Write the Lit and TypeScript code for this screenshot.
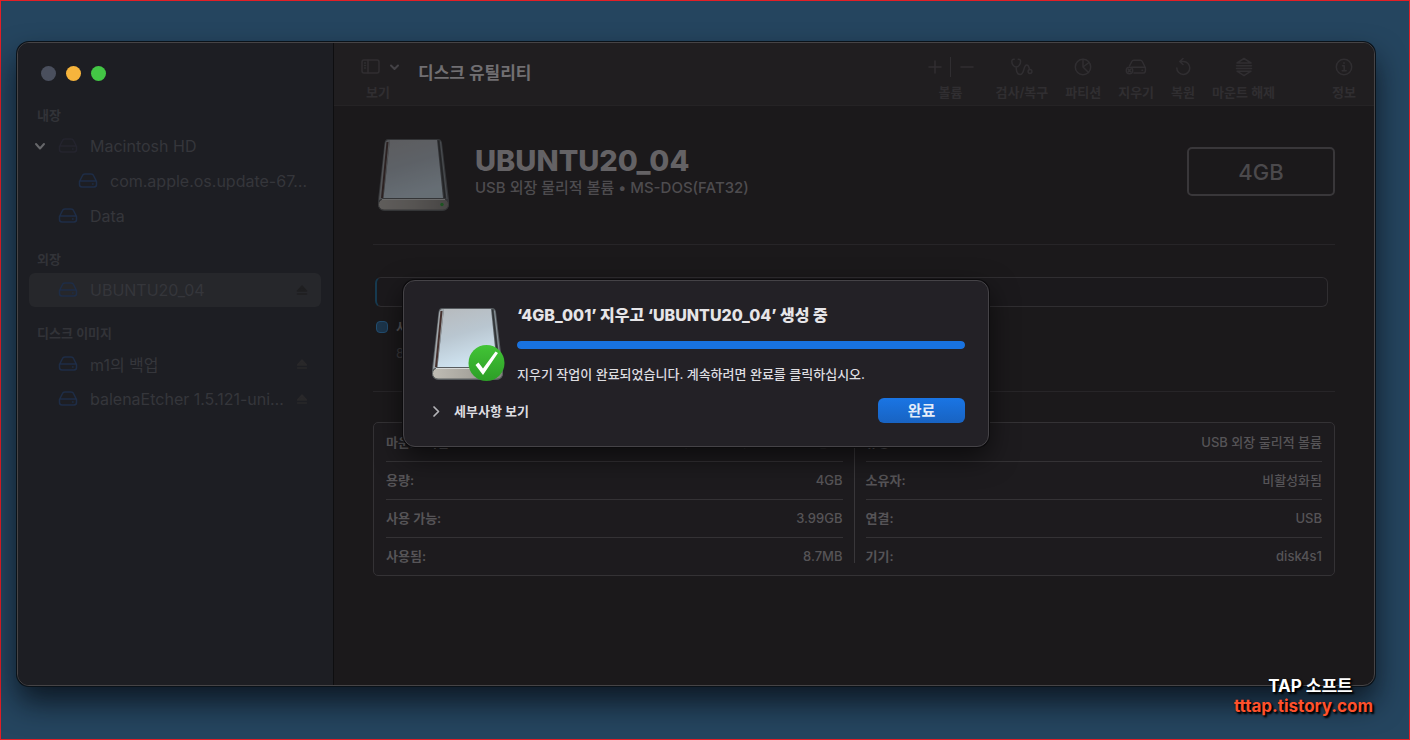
import { LitElement, html, css, svg, nothing } from "lit";
import { customElement, property } from "lit/decorators.js";

type Volume = { name: string; indent?: boolean; open?: boolean; dim?: boolean; selected?: boolean; eject?: boolean };
type Section = { title: string; volumes: Volume[] };

const sections: Section[] = [
  {
    title: "내장",
    volumes: [
      { name: "Macintosh HD", open: true, dim: true },
      { name: "com.apple.os.update-67…", indent: true },
      { name: "Data" },
    ],
  },
  { title: "외장", volumes: [{ name: "UBUNTU20_04", selected: true, eject: true }] },
  {
    title: "디스크 이미지",
    volumes: [
      { name: "m1의 백업", eject: true },
      { name: "balenaEtcher 1.5.121-uni…", eject: true },
    ],
  },
];

const details: [string, string][][] = [
  [
    ["마운트 지점:", "/Volumes/UBUNTU20_04"],
    ["용량:", "4GB"],
    ["사용 가능:", "3.99GB"],
    ["사용됨:", "8.7MB"],
  ],
  [
    ["유형:", "USB 외장 물리적 볼륨"],
    ["소유자:", "비활성화됨"],
    ["연결:", "USB"],
    ["기기:", "disk4s1"],
  ],
];

const toolIcons = {
  check: svg`<path d="M3.200 2.200Q.8 2 .8 4.500C.8 7.500 3 10 5.200 10S9.600 7.500 9.600 4.500Q9.600 2 7.200 2.200M5.200 10c0 3.500 1 7.500 4 7.500 4.500 0 3-9.500 6.500-9.500 2.500 0 2 3 3 4.700"/><circle cx="19" cy="14.500" r="1.900"/>`,
  partition: svg`<circle cx="11" cy="10" r="7.700"/><path d="M11 2.300V10l5.500 5.500M11 10l6-4.500"/>`,
  erase: svg`<path d="M4.500 9 6.800 4.500q.6-1.200 2-1.200h6.500q1.400 0 2 1.200l3 6q.9 5.500-2 5.500H9M6.500 10.200h13.500M17 13.200h.5"/><circle cx="4.500" cy="13.500" r="3.200"/><path d="m3.400 12.400 2.200 2.200m0-2.200-2.200 2.200"/>`,
  restore: svg`<path d="M8 4.500h3.500a6.500 6.500 0 1 1-6.700 6.500M11 1.500l-3.300 3 3.300 3"/>`,
  unmount: svg`<path d="M4 6 11 1.500 18 6zM3.500 8.700h15M3.500 11.500h15M4 14.200l7 4.500 7-4.500z"/>`,
  info: svg`<circle cx="11" cy="10" r="7.700"/><path d="M9.500 8.700h1.700v5M9.200 13.700h4M11 5.700v.8"/>`,
};

const tools: { label: string; icon: unknown }[] = [
  { label: "검사/복구", icon: toolIcons.check },
  { label: "파티션", icon: toolIcons.partition },
  { label: "지우기", icon: toolIcons.erase },
  { label: "복원", icon: toolIcons.restore },
  { label: "마운트 해제", icon: toolIcons.unmount },
];

@customElement("drive-picture")
class DrivePicture extends LitElement {
  @property({ type: Boolean }) done = false;

  static styles = css`
    :host { display: block; width: 76px; height: 76px; flex: none; }
    svg { display: block; }
  `;

  render() {
    return html`<svg width="76" height="76" viewBox="0 0 76 76" aria-hidden="true">
      <defs>
        <linearGradient id="face" x1="0" y1="0" x2="0.3" y2="1">
          <stop offset="0" stop-color="#b7babd" /><stop offset="0.5" stop-color="#b9c6d0" /><stop offset="1" stop-color="#cfe3f0" />
        </linearGradient>
        <linearGradient id="base" x1="0" y1="0" x2="1" y2="0">
          <stop offset="0" stop-color="#bfbcb4" /><stop offset="0.5" stop-color="#a9a69f" /><stop offset="1" stop-color="#85837e" />
        </linearGradient>
        <linearGradient id="badge" x1="0" y1="0" x2="0" y2="1">
          <stop offset="0" stop-color="#42c436" /><stop offset="1" stop-color="#2d9e27" />
        </linearGradient>
      </defs>
      <path d="M13 2h50q3.500 0 4 4L74 63v4q0 7-7 7H10q-7 0-7-7v-4L9.500 6q.5-4 3.500-4z" fill="#565b5f" />
      <path d="M13 3h2L8 61l-4 2L10 7q.5-3.500 3-4z" fill="#a1a7ab" />
      <path d="M12.500 5 7 61" stroke="#45302d" stroke-width="2" />
      <path d="M63.500 3.500 70 61" stroke="#2f3437" stroke-width="1.500" />
      <path d="M65.500 4.500 72 62" stroke="#8a959c" stroke-width="1" />
      <path d="M15 3h47l6 58H8.500z" fill="url(#face)" />
      <rect x="3.500" y="62" width="70" height="11" rx="5.500" fill="url(#base)" stroke="#5b5f60" stroke-width="1" />
      <path d="M7 62.500h63" stroke="#d6d8d6" stroke-width="1" />
      <circle cx="67" cy="67.500" r="1.700" fill="#1fa52a" />
      ${this.done
        ? svg`<circle cx="57.500" cy="57" r="18" fill="url(#badge)" />
            <path d="m46.500 59 3-2.500 4.500 6 12.500-17 2.500 1.500-15 22z" fill="#fff" />`
        : nothing}
    </svg>`;
  }
}

@customElement("disk-sidebar")
class DiskSidebar extends LitElement {
  static styles = css`
    :host { display: block; flex: none; width: 315px; background: #1d1e23; border-right: 1px solid #0e0e10; color: #35363b; font-size: 16px; }
    .lights { display: flex; gap: 10px; padding: 23px 23px 24px; }
    .light { width: 15px; height: 15px; padding: 0; border: 0; border-radius: 50%; background: #4a4f5d; }
    .minimize { background: #f6b43c; }
    .zoom { background: #43c645; }
    .heading { margin: 0 0 4px; padding-left: 19px; font-size: 13px; line-height: 20px; font-weight: 600; color: #323338; }
    .list { list-style: none; margin: 0 12px 16px 11px; padding: 0; display: grid; gap: 1px; }
    .row { display: flex; align-items: center; height: 34px; padding: 0 13px 0 3px; border-radius: 6px; }
    .selected { background: #26272b; }
    .arrow { width: 16px; height: 16px; margin-right: 10px; flex: none; }
    .indent { padding-left: 23px; }
    .drive { flex: none; width: 20px; height: 18px; margin-right: 12px; color: #1e2d47; }
    .dim { color: #24242e; }
    .name { flex: 1; min-width: 0; white-space: nowrap; color: inherit; text-decoration: none; }
    .eject { padding: 0; border: 0; background: none; width: 12px; height: 12px; color: #29282a; }
    .selected .eject { color: #1f1f21; }
    svg { display: block; fill: none; stroke: currentColor; stroke-width: 1.5; stroke-linejoin: round; stroke-linecap: round; }
    .chevron { stroke: #66676a; stroke-width: 2; }
  `;

  render() {
    return html`
      <div class="lights">
        <button class="light" aria-label="닫기"></button>
        <button class="light minimize" aria-label="최소화"></button>
        <button class="light zoom" aria-label="확대"></button>
      </div>
      ${sections.map(
        (s) => html`<h2 class="heading">${s.title}</h2>
          <ul class="list">
            ${s.volumes.map(
              (v) => html`<li class="row ${v.selected ? "selected" : ""} ${v.indent ? "indent" : ""}">
                <svg class="arrow" viewBox="0 0 16 16">${v.open ? svg`<path class="chevron" d="m4 6 4 4.500L12 6" />` : nothing}</svg>
                <svg class="drive ${v.dim ? "dim" : ""}" viewBox="0 0 20 18">
                  <path d="m1.500 9.500 3-6Q5 2 7 2h6q2 0 2.500 1.500l3 6v3q0 2.500-2.500 2.500H4q-2.500 0-2.500-2.500zM2 9h16M14.500 12h.5" />
                </svg>
                <a class="name" href="#">${v.name}</a>
                ${v.eject
                  ? html`<button class="eject" aria-label="추출"><svg viewBox="0 0 12 12"><path d="M6 2 1.500 7h9zM1.500 10h9" fill="currentColor" /></svg></button>`
                  : nothing}
              </li>`
            )}
          </ul>`
      )}
    `;
  }
}

@customElement("disk-toolbar")
class DiskToolbar extends LitElement {
  static styles = css`
    :host { display: flex; box-sizing: border-box; height: 63px; padding: 14px 18px 0 26px; background: #201e20; border-bottom: 1px solid #252325; color: #302e31; }
    button { padding: 0; border: 0; background: none; color: inherit; font: 600 13px/18px "Inter", "Noto Sans CJK KR", sans-serif; }
    .view { display: flex; flex-direction: column; width: 40px; height: 44px; gap: 6px; }
    .view-label { padding-left: 6px; text-align: left; }
    .title { margin: 4px auto 0 18px; font-size: 17px; line-height: 24px; font-weight: 700; color: #716f72; }
    .tools { display: flex; gap: 17px; }
    .tool, .volume { display: flex; flex-direction: column; align-items: center; gap: 6px; height: 44px; }
    .volume { width: 46px; margin-right: 5px; }
    .pair { display: flex; justify-content: space-between; width: 100%; }
    .info { margin-left: 40px; }
    svg { display: block; fill: none; stroke: currentColor; stroke-width: 1.5; stroke-linecap: round; stroke-linejoin: round; }
    .rule { width: 1px; height: 20px; background: currentColor; }
    .chevron { stroke: #444246; stroke-width: 2; }
  `;

  render() {
    return html`
      <button class="view">
        <svg width="40" height="20" viewBox="0 0 40 20">
          <rect x="2" y="3" width="17" height="13" rx="2" /><path d="M8 3v13M4.500 6h1M4.500 8.500h1M4.500 11h1" />
          <path class="chevron" d="m31 8.500 3.500 3.500L38 8.500" />
        </svg>
        <span class="view-label">보기</span>
      </button>
      <h1 class="title">디스크 유틸리티</h1>
      <div class="tools">
        <div class="volume">
          <div class="pair">
            <button aria-label="볼륨 추가"><svg width="14" height="20" viewBox="0 0 14 20"><path d="M1 10h12M7 4v12" /></svg></button>
            <span class="rule"></span>
            <button aria-label="볼륨 삭제"><svg width="14" height="20" viewBox="0 0 14 20"><path d="M1 10h12" /></svg></button>
          </div>
          <button>볼륨</button>
        </div>
        ${tools.map((t) => html`<button class="tool"><svg width="22" height="20" viewBox="0 0 22 20">${t.icon}</svg>${t.label}</button>`)}
        <button class="tool info"><svg width="22" height="20" viewBox="0 0 22 20">${toolIcons.info}</svg>정보</button>
      </div>
    `;
  }
}

@customElement("disk-details")
class DiskDetails extends LitElement {
  static styles = css`
    :host { display: block; padding: 31px 39px 24px; color: #565457; font-size: 13px; }
    .summary { display: flex; align-items: flex-start; padding: 0 0 31px 2px; border-bottom: 1px solid #272528; }
    .picture { opacity: 0.42; }
    .names { margin-left: 24px; padding-top: 7px; flex: 1; }
    .name { margin: 0; font-size: 29px; line-height: 34px; font-weight: 800; color: #646265; }
    .kind { margin: 0; font-size: 15px; line-height: 20px; font-weight: 500; color: #4e4c4f; }
    .size { box-sizing: border-box; width: 148px; height: 49px; margin-top: 10px; border: 2px solid #39373a; border-radius: 5px; text-align: center; font-size: 22px; line-height: 46px; font-weight: 500; color: #4b494c; }
    .usage { padding: 32px 7px 22px 2px; border-bottom: 1px solid #272528; }
    .bar { height: 28px; border: 1px solid #302e31; border-left: 2px solid #173a50; border-radius: 6px; background: #1b191c; }
    .legend { display: grid; grid-template-columns: 12px 1fr; column-gap: 8px; align-items: center; padding: 10px 0 0 1px; line-height: 20px; }
    .swatch { width: 10px; height: 10px; border: 1px solid #224d70; border-radius: 4px; background: #1c354b; }
    .used { font-weight: 700; }
    .amount { grid-column: 2; line-height: 32px; color: #39373a; }
    .info { display: grid; grid-template-columns: 1fr 1px 1fr; column-gap: 11px; margin-top: 30px; padding: 0 12px; border: 1px solid #343235; border-radius: 5px; background: #1d1b1e; }
    .split { margin: 12px 0; background: #39373a; }
    table { width: 100%; border-collapse: collapse; }
    tr { height: 38px; border-bottom: 1px solid #343235; }
    tr:last-child { border-bottom: 0; }
    th, td { padding: 0; line-height: 20px; }
    th { text-align: left; font-weight: 600; }
    td { text-align: right; font-weight: 500; }
  `;

  render() {
    const table = (rows: [string, string][]) => html`<table>
      ${rows.map(([k, v]) => html`<tr><th scope="row">${k}</th><td>${v}</td></tr>`)}
    </table>`;
    return html`
      <div class="summary">
        <drive-picture class="picture"></drive-picture>
        <div class="names">
          <h2 class="name">UBUNTU20_04</h2>
          <p class="kind">USB 외장 물리적 볼륨 • MS-DOS(FAT32)</p>
        </div>
        <div class="size">4GB</div>
      </div>
      <div class="usage">
        <div class="bar"></div>
        <div class="legend">
          <span class="swatch"></span><span class="used">사용됨</span>
          <span class="amount">8.7MB</span>
        </div>
      </div>
      <div class="info">${table(details[0])}<div class="split"></div>${table(details[1])}</div>
    `;
  }
}

@customElement("erase-dialog")
class EraseDialog extends LitElement {
  static styles = css`
    :host { display: block; box-sizing: border-box; width: 586px; max-width: 100%; padding: 24px 23px 23px 25px; border: 1px solid #454347; border-radius: 12px; background: #232126; color: #dedde0; font-size: 13px; box-shadow: 0 0 0 1px #0c0b0d, 0 10px 28px rgba(0, 0, 0, 0.6); }
    .top { display: flex; gap: 12px; }
    .picture { margin-top: 1px; }
    .body { flex: 1; min-width: 0; }
    .title { margin: 0; font-size: 16px; line-height: 20px; font-weight: 800; color: #e6e5e8; }
    progress { display: block; width: 100%; height: 8px; margin: 16px 0 13px; border: 0; border-radius: 4px; overflow: hidden; appearance: none; background: #38363b; }
    progress::-webkit-progress-bar { background: #38363b; }
    progress::-webkit-progress-value { background: #1872e0; border-radius: 4px; }
    .text { margin: 0; line-height: 24px; font-weight: 500; }
    .actions { display: flex; justify-content: space-between; align-items: center; margin-top: 12px; }
    button { border: 0; padding: 0; background: none; color: inherit; font: 600 13px/20px "Inter", "Noto Sans CJK KR", sans-serif; }
    .more { display: flex; align-items: center; gap: 11px; }
    .done { width: 87px; height: 25px; border-radius: 6px; background: linear-gradient(#1a75e4, #1863c2); color: #e4edf9; font-size: 15px; line-height: 24px; }
  `;

  render() {
    return html`
      <div class="top">
        <drive-picture class="picture" done></drive-picture>
        <div class="body">
          <h2 class="title">‘4GB_001’ 지우고 ‘UBUNTU20_04’ 생성 중</h2>
          <progress max="100" value="100" aria-label="진행률"></progress>
          <p class="text">지우기 작업이 완료되었습니다. 계속하려면 완료를 클릭하십시오.</p>
        </div>
      </div>
      <div class="actions">
        <button class="more">
          <svg width="14" height="14" viewBox="0 0 14 14" fill="none" stroke="#b4b3b7" stroke-width="1.700" stroke-linecap="round" stroke-linejoin="round"><path d="m5 3 4.500 4.500L5 12" /></svg>세부사항 보기
        </button>
        <button class="done">완료</button>
      </div>
    `;
  }
}

@customElement("app-root")
class AppRoot extends LitElement {
  static styles = css`
    :host { display: flex; box-sizing: border-box; min-height: 100vh; position: relative; padding: 41px 34px 53px 16px; border: 1px solid #e31f26; background: #25455f; font-family: "Inter", "Noto Sans CJK KR", sans-serif; }
    .window { position: relative; flex: 1; min-width: 0; display: flex; border: 1px solid #464446; border-radius: 12px; overflow: hidden; background: #1b191b; box-shadow: 0 0 0 1px #0a1219, 0 16px 30px rgba(5, 10, 16, 0.75); }
    .main { flex: 1; min-width: 0; }
    .sheet { position: absolute; inset: 237px 0 auto; display: flex; justify-content: center; }
    .credit { position: absolute; right: 36px; bottom: 23px; text-align: center; font-weight: 700; line-height: 20px; text-shadow: 1px 1px 2px #000, 2px 2px 2px #000; }
    .brand { margin: 0 0 0 14px; font-size: 17px; color: #fff; }
    .site { display: block; font-size: 17px; color: #ff512c; text-decoration: none; }
  `;

  render() {
    return html`
      <div class="window">
        <disk-sidebar></disk-sidebar>
        <main class="main">
          <disk-toolbar></disk-toolbar>
          <disk-details></disk-details>
        </main>
        <div class="sheet"><erase-dialog role="dialog"></erase-dialog></div>
      </div>
      <div class="credit">
        <p class="brand">TAP 소프트</p>
        <a class="site" href="#">tttap.tistory.com</a>
      </div>
    `;
  }
}
